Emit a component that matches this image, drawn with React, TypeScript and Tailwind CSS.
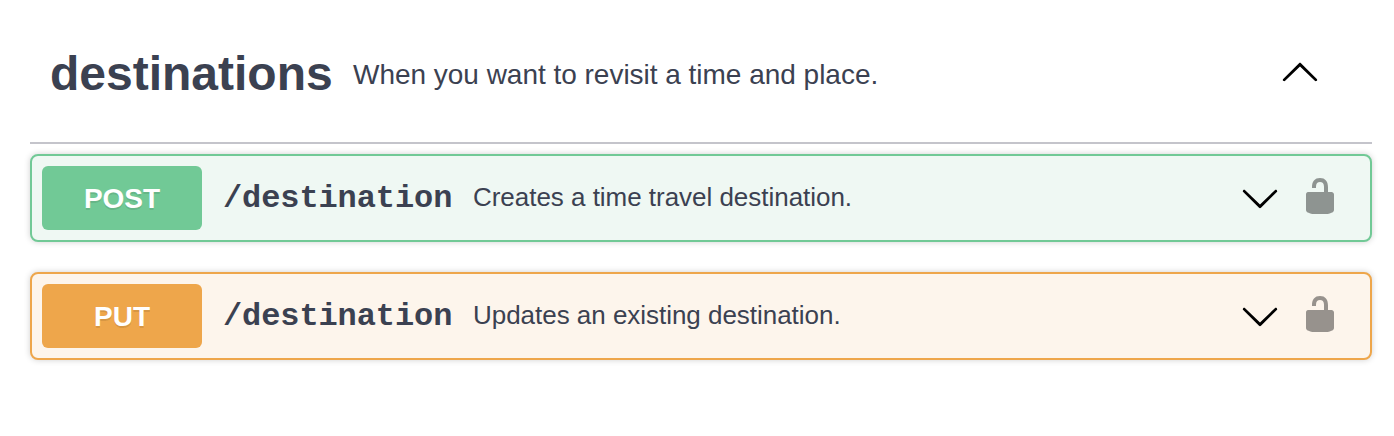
function Chevron({ up = false }: { up?: boolean }) {
  return (
    <svg className={up ? "h-10 w-10 shrink-0" : "h-10 w-10 shrink-0 rotate-180"} viewBox="0 0 20 20" fill="#000">
      <path d="M 17.418 14.908 C 17.69 15.176 18.127 15.176 18.397 14.908 C 18.667 14.64 18.668 14.207 18.397 13.939 L 10.489 6.109 C 10.219 5.841 9.782 5.841 9.51 6.109 L 1.602 13.939 C 1.332 14.207 1.332 14.64 1.602 14.908 C 1.873 15.176 2.311 15.176 2.581 14.908 L 10 7.767 L 17.418 14.908 Z" />
    </svg>
  );
}

function Unlocked() {
  return (
    <svg className="h-10 w-10 shrink-0 opacity-40" viewBox="0 0 20 20" fill="#000">
      <path d="M15.8 8H14V5.6C14 2.703 12.665 1 10 1 7.334 1 6 2.703 6 5.6V6h2v-.801C8 3.754 8.797 3 10 3c1.203 0 2 .754 2 2.199V8H4c-.553 0-1 .646-1 1.199V17c0 .549.428 1.139.951 1.307l1.197.387C5.672 18.861 6.55 19 7.1 19h5.8c.549 0 1.428-.139 1.951-.307l1.196-.387c.524-.167.953-.757.953-1.306V9.199C17 8.646 16.352 8 15.8 8z" />
    </svg>
  );
}

const operations = [
  {
    method: "POST",
    summary: "Creates a time travel destination.",
    box: "border-[#71c996] bg-[#eff8f3]",
    badge: "bg-[#71c996]",
  },
  {
    method: "PUT",
    summary: "Updates an existing destination.",
    box: "border-[#eea64b] bg-[#fdf5ec]",
    badge: "bg-[#eea64b]",
  },
];

export default function App() {
  return (
    <main className="h-[436px] w-[1394px] bg-white pt-1 pr-[22px] pl-[30px] font-['Liberation_Sans',Arial,sans-serif] text-[#3b4151]">
      <header className="flex h-[140px] items-center border-b-2 border-[#c4c4cb] pr-[52px] pl-5">
        <h2 className="w-[303px] shrink-0 pt-0.5 text-[48px] font-bold whitespace-nowrap">destinations</h2>
        <p className="flex-1 pt-1 text-[28px] tracking-[-0.02px]">When you want to revisit a time and place.</p>
        <span className="flex pb-1">
          <Chevron up />
        </span>
      </header>
      <div className="mt-[10px] flex flex-col gap-[30px]">
        {operations.map((op) => (
          <div
            key={op.method}
            className={`flex h-[88px] items-center rounded-lg border-2 pr-[30px] pl-[10px] shadow-[0_0_6px_rgba(0,0,0,0.19)] ${op.box}`}
          >
            <span
              className={`flex h-16 w-40 shrink-0 items-center justify-center rounded-md pt-px text-[28px] font-bold text-white [text-shadow:0_2px_0_rgba(0,0,0,0.1)] ${op.badge}`}
            >
              {op.method}
            </span>
            <span className="ml-[21px] w-[250px] shrink-0 pt-0.5 font-['Liberation_Mono','Courier_New',monospace] text-[32px] font-bold tracking-[-0.1px]">
              /destination
            </span>
            <span className="flex-1 pb-0.5 text-[26px] tracking-[-0.03px]">{op.summary}</span>
            <span className="flex pt-1">
              <Chevron />
            </span>
            <span className="ml-5 flex pb-1">
              <Unlocked />
            </span>
          </div>
        ))}
      </div>
    </main>
  );
}
